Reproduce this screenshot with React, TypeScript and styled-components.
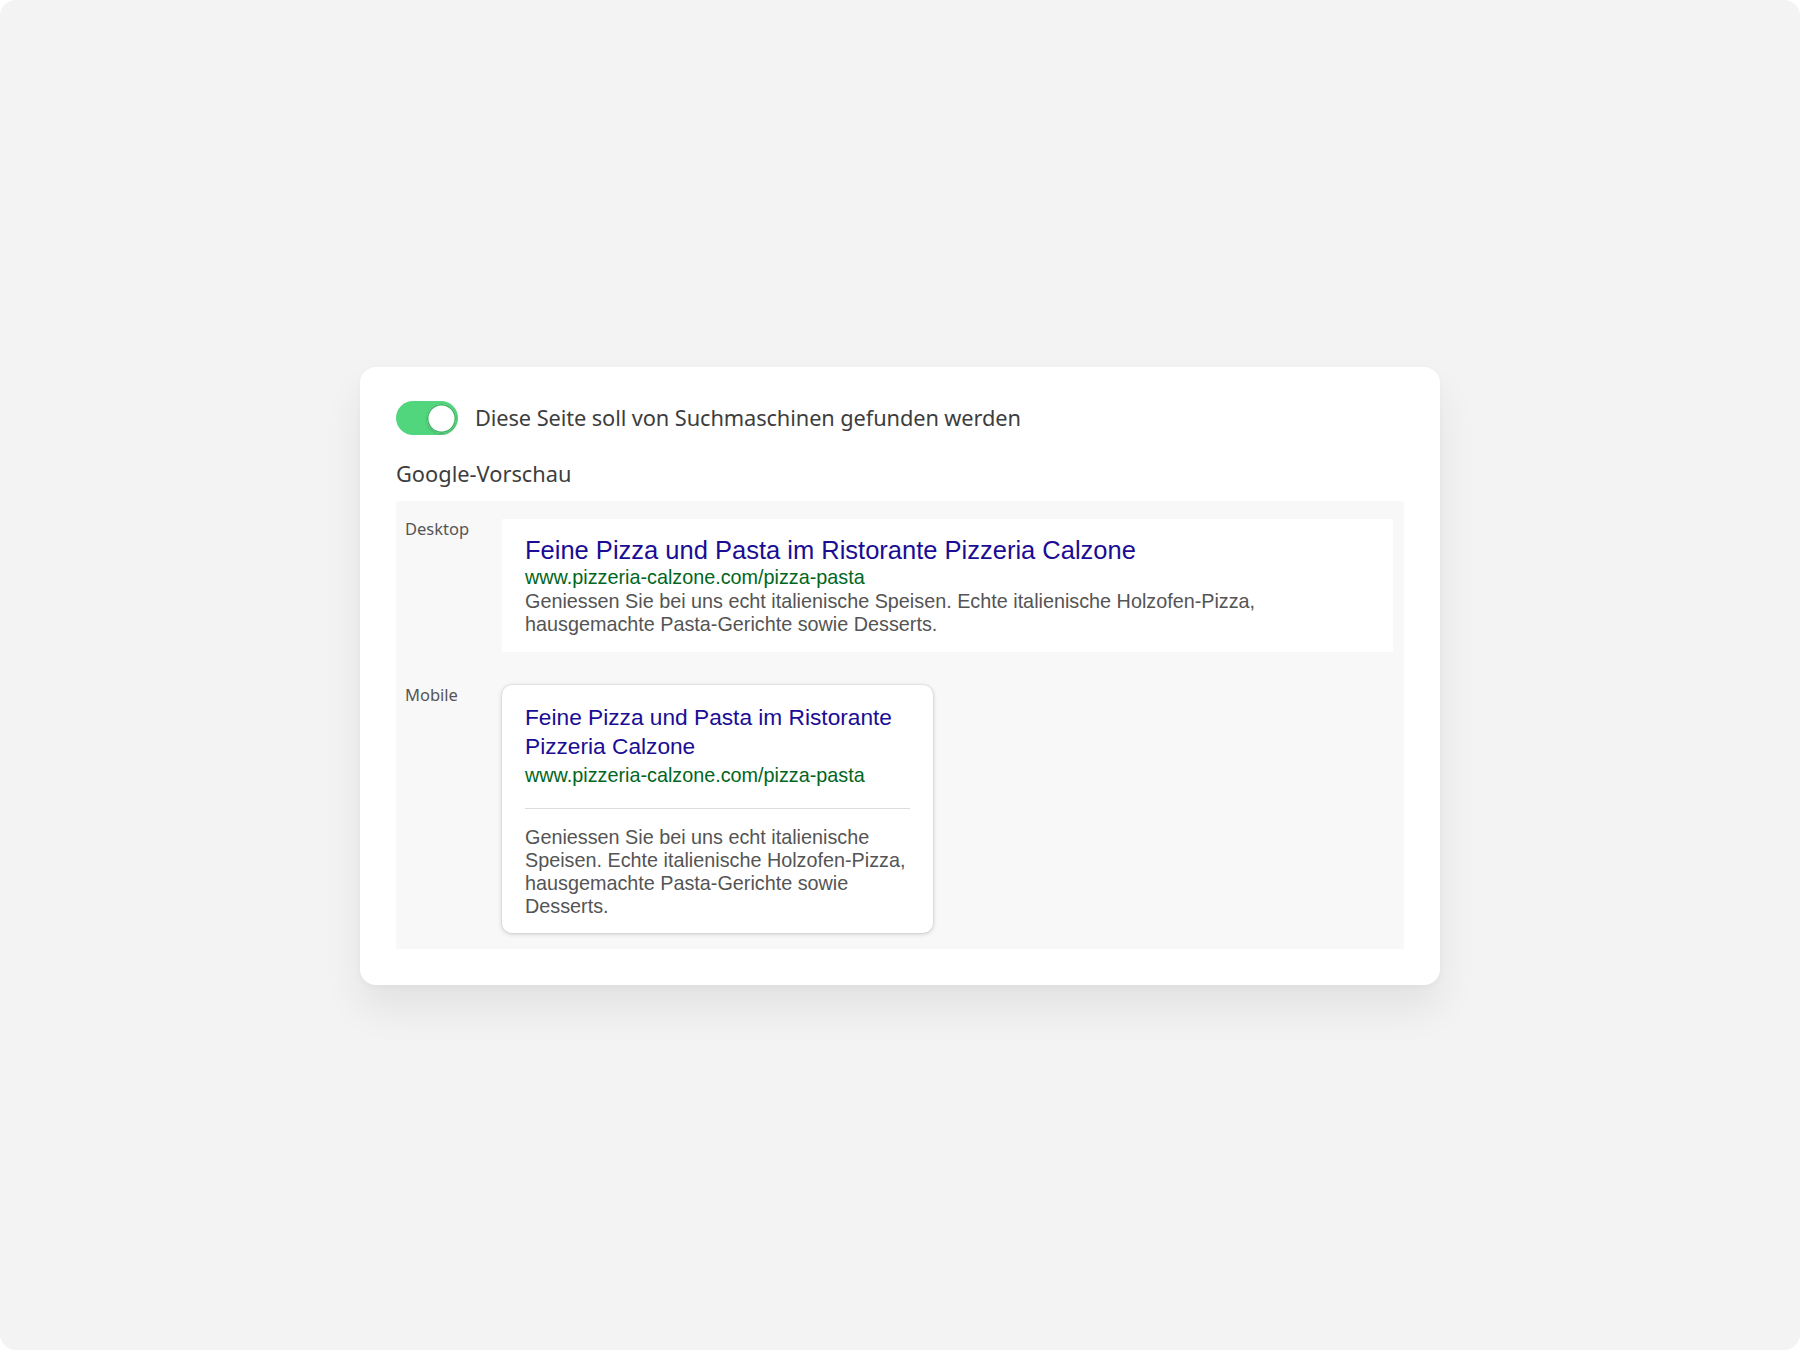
import React from "react";
import styled, { createGlobalStyle } from "styled-components";

const Global = createGlobalStyle`
  html, body { margin: 0; padding: 0; background: #ffffff; }
  * { box-sizing: border-box; }
`;

const Page = styled.div`
  width: 1800px;
  height: 1350px;
  background: #f3f3f3;
  border-radius: 16px;
  display: flex;
  align-items: center;
  justify-content: center;
  padding-top: 2px;
`;

const Card = styled.div`
  width: 1080px;
  background: #ffffff;
  border-radius: 16px;
  padding: 34px 36px 36px 36px;
  box-shadow: 0 24px 40px rgba(0, 0, 0, 0.07), 0 2px 6px rgba(0, 0, 0, 0.03);
  font-family: "Noto Sans", Roboto, sans-serif;
`;

const ToggleRow = styled.div`
  display: flex;
  align-items: center;
  gap: 17px;
`;

const Track = styled.div<{ $on: boolean }>`
  width: 62px;
  height: 34px;
  border-radius: 17px;
  background: ${(p) => (p.$on ? "#52d67d" : "#cccccc")};
  display: flex;
  align-items: center;
  justify-content: ${(p) => (p.$on ? "flex-end" : "flex-start")};
  padding: 0 2px;
`;

const Thumb = styled.div`
  width: 29px;
  height: 29px;
  border-radius: 50%;
  background: #ffffff;
  box-shadow: inset 0 0 0 1.5px #3fb766, 0 1px 3px rgba(0, 0, 0, 0.2);
`;

const ToggleLabel = styled.span`
  font-size: 21.8px;
  line-height: 30px;
  color: #3d3d3d;
  letter-spacing: -0.1px;
`;

const SectionTitle = styled.div`
  margin-top: 25px;
  font-size: 21.8px;
  color: #3d3d3d;
  line-height: 28px;
`;

const Preview = styled.div`
  margin-top: 13px;
  background: #f8f8f8;
  padding: 18px 11px 16px 9px;
  display: grid;
  grid-template-columns: 97px 1fr;
  row-gap: 33px;
`;

const DeviceLabel = styled.div`
  font-size: 16.5px;
  color: #555555;
  line-height: 20px;
`;

const ResultBox = styled.div<{ $mobile?: boolean }>`
  background: #ffffff;
  font-family: "Liberation Sans", Arial, sans-serif;
  padding: ${(p) => (p.$mobile ? "18px 23px 15px 23px" : "15.5px 23px 16px 23px")};
  width: ${(p) => (p.$mobile ? "431px" : "auto")};
  border-radius: ${(p) => (p.$mobile ? "10px" : "0")};
  box-shadow: ${(p) =>
    p.$mobile ? "0 1px 5px rgba(0,0,0,0.18), 0 0 0 1px rgba(0,0,0,0.04)" : "none"};
`;

const ResultTitle = styled.div<{ $mobile?: boolean }>`
  color: #1a0d94;
  font-size: ${(p) => (p.$mobile ? "22.7px" : "25.5px")};
  line-height: ${(p) => (p.$mobile ? "29px" : "30px")};
`;

const ResultUrl = styled.div<{ $mobile?: boolean }>`
  color: #006621;
  font-size: 19.8px;
  line-height: 25px;
  margin-top: ${(p) => (p.$mobile ? "2px" : "0")};
`;

const Divider = styled.div`
  height: 1px;
  background: #dddddd;
  margin: 20px 0 17px 0;
`;

const ResultDesc = styled.div<{ $max?: number }>`
  color: #545454;
  font-size: 19.8px;
  line-height: 23px;
  max-width: ${(p) => (p.$max ? `${p.$max}px` : "none")};
`;

const title = "Feine Pizza und Pasta im Ristorante Pizzeria Calzone";
const url = "www.pizzeria-calzone.com/pizza-pasta";
const desc =
  "Geniessen Sie bei uns echt italienische Speisen. Echte italienische Holzofen-Pizza, hausgemachte Pasta-Gerichte sowie Desserts.";

export default function App() {
  return (
    <>
      <Global />
      <Page>
        <Card>
          <ToggleRow>
            <Track $on>
              <Thumb />
            </Track>
            <ToggleLabel>Diese Seite soll von Suchmaschinen gefunden werden</ToggleLabel>
          </ToggleRow>
          <SectionTitle>Google-Vorschau</SectionTitle>
          <Preview>
            <DeviceLabel>Desktop</DeviceLabel>
            <ResultBox>
              <ResultTitle>{title}</ResultTitle>
              <ResultUrl>{url}</ResultUrl>
              <ResultDesc $max={760}>{desc}</ResultDesc>
            </ResultBox>
            <DeviceLabel>Mobile</DeviceLabel>
            <ResultBox $mobile>
              <ResultTitle $mobile>{title}</ResultTitle>
              <ResultUrl $mobile>{url}</ResultUrl>
              <Divider />
              <ResultDesc>{desc}</ResultDesc>
            </ResultBox>
          </Preview>
        </Card>
      </Page>
    </>
  );
}
